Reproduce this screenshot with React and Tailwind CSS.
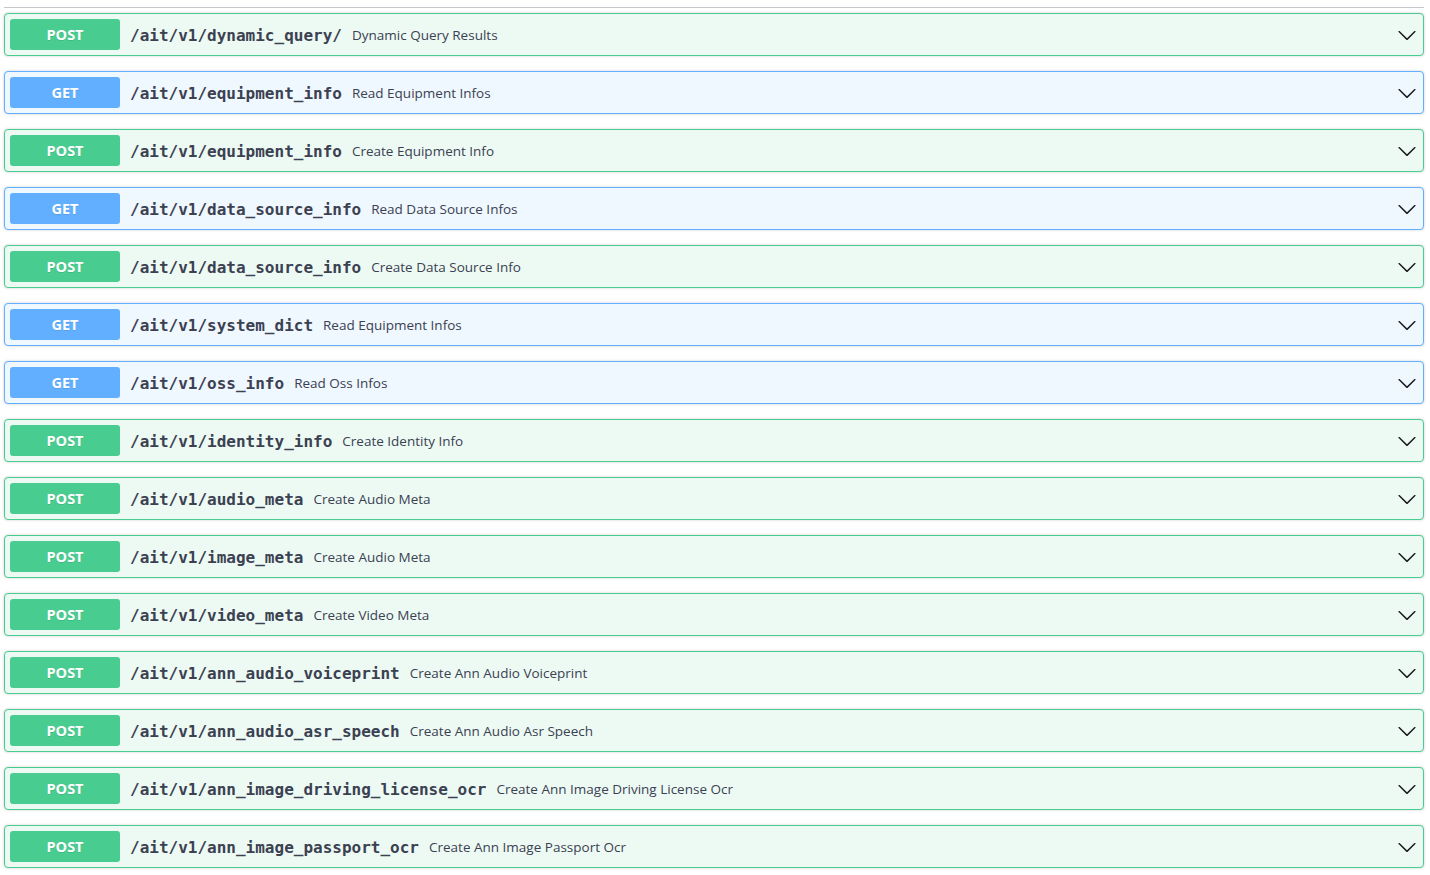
import React from "react";

const ops = [
  ["POST", "/ait/v1/dynamic_query/", "Dynamic Query Results"],
  ["GET", "/ait/v1/equipment_info", "Read Equipment Infos"],
  ["POST", "/ait/v1/equipment_info", "Create Equipment Info"],
  ["GET", "/ait/v1/data_source_info", "Read Data Source Infos"],
  ["POST", "/ait/v1/data_source_info", "Create Data Source Info"],
  ["GET", "/ait/v1/system_dict", "Read Equipment Infos"],
  ["GET", "/ait/v1/oss_info", "Read Oss Infos"],
  ["POST", "/ait/v1/identity_info", "Create Identity Info"],
  ["POST", "/ait/v1/audio_meta", "Create Audio Meta"],
  ["POST", "/ait/v1/image_meta", "Create Audio Meta"],
  ["POST", "/ait/v1/video_meta", "Create Video Meta"],
  ["POST", "/ait/v1/ann_audio_voiceprint", "Create Ann Audio Voiceprint"],
  ["POST", "/ait/v1/ann_audio_asr_speech", "Create Ann Audio Asr Speech"],
  ["POST", "/ait/v1/ann_image_driving_license_ocr", "Create Ann Image Driving License Ocr"],
  ["POST", "/ait/v1/ann_image_passport_ocr", "Create Ann Image Passport Ocr"],
];

function Chevron() {
  return (
    <svg width="20" height="20" viewBox="0 0 20 20" className="shrink-0">
      <path
        fill="#1a1a1a"
        d="M17.418 6.109c.272-.268.709-.268.979 0s.271.701 0 .969l-7.908 7.83c-.27.268-.707.268-.979 0l-7.908-7.83c-.27-.268-.27-.701 0-.969.271-.268.709-.268.979 0L10 13.25l7.418-7.141z"
      />
    </svg>
  );
}

function Op({ method, path, desc }) {
  const post = method === "POST";
  return (
    <div
      className={
        "flex items-center h-[43px] mb-[15px] rounded-[4px] border p-[5px] shadow-[0_0_3px_rgba(0,0,0,0.19)] " +
        (post ? "border-[#49cc90] bg-[#edfaf4]" : "border-[#61affe] bg-[#eff7ff]")
      }
    >
      <div
        className={
          "w-[110px] h-[31px] shrink-0 rounded-[3px] flex items-center justify-center text-white text-[14.5px] font-bold [text-shadow:0_1px_0_rgba(0,0,0,0.1)] " +
          (post ? "bg-[#49cc90]" : "bg-[#61affe]")
        }
        style={{ fontFamily: '"Open Sans", sans-serif' }}
      >
        {method}
      </div>
      <span
        className="mt-[2px] px-[10px] text-[16px] font-bold text-[#3b4151] whitespace-nowrap"
        style={{ fontFamily: '"DejaVu Sans Mono", monospace' }}
      >
        {path}
      </span>
      <span
        className="mt-[2px] text-[13.5px] text-[#3b4151] whitespace-nowrap"
        style={{ fontFamily: '"Open Sans", sans-serif' }}
      >
        {desc}
      </span>
      <div className="ml-auto mr-[1px] flex items-center">
        <Chevron />
      </div>
    </div>
  );
}

export default function App() {
  return (
    <div className="w-[1430px] h-[875px] overflow-hidden bg-white pl-[4px] pr-[6px]">
      <div className="mt-[7px] mb-[5px] h-px bg-[#c4c6cb]" />
      {ops.map(([m, p, d], i) => (
        <Op key={i} method={m} path={p} desc={d} />
      ))}
    </div>
  );
}
